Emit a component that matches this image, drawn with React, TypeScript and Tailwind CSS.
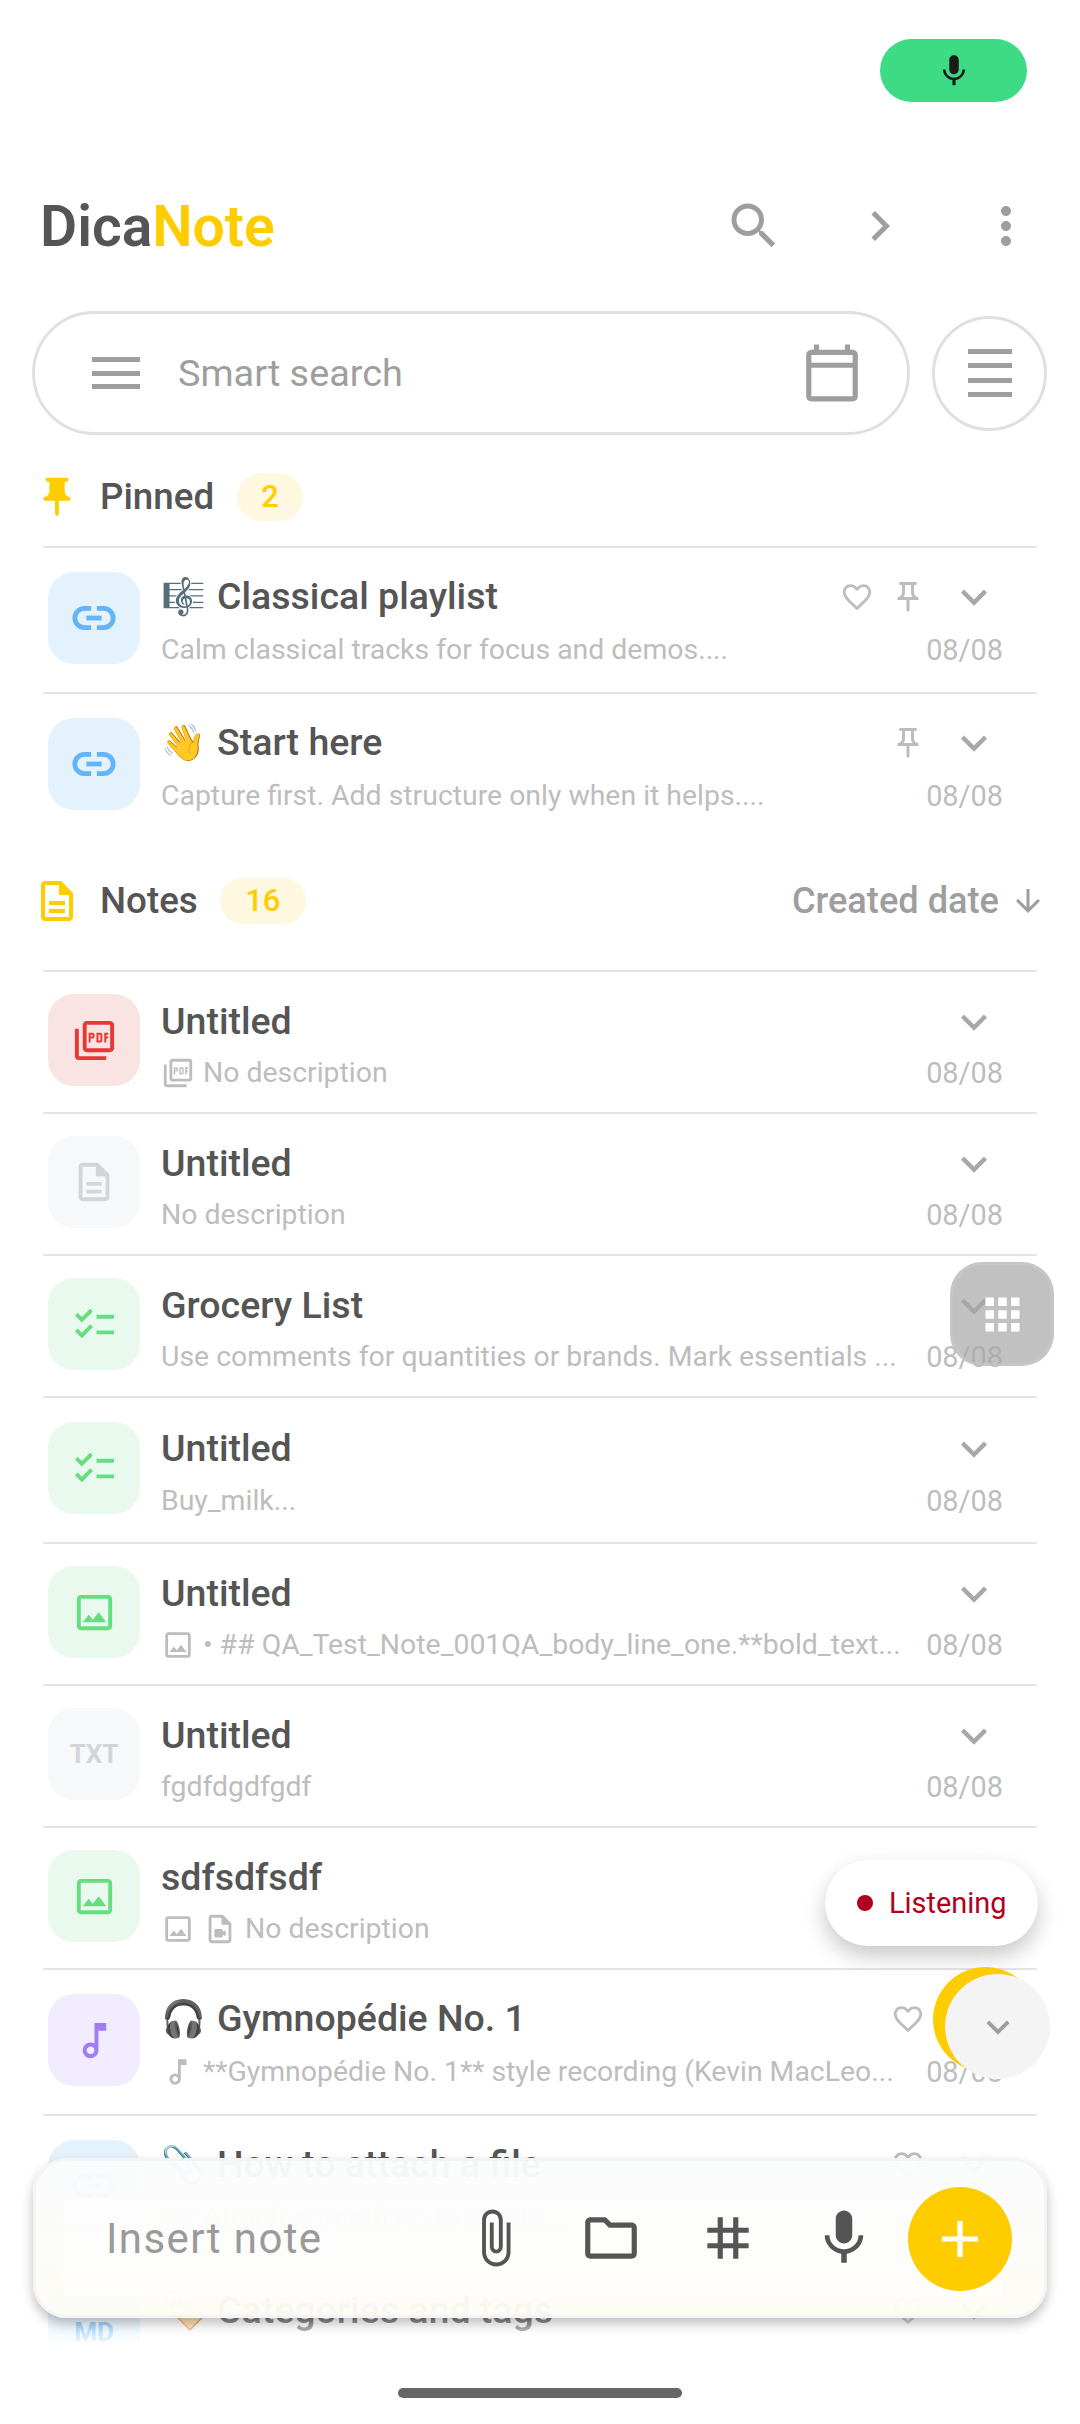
import React from "react";
import {
  MdAdd,
  MdApps,
  MdArrowDownward,
  MdChecklist,
  MdChevronRight,
  MdFavoriteBorder,
  MdKeyboardArrowDown,
  MdMic,
  MdMoreVert,
  MdOutlineAttachFile,
  MdOutlineCalendarToday,
  MdOutlineDescription,
  MdOutlineFolder,
  MdOutlineImage,
  MdOutlineMusicNote,
  MdOutlinePictureAsPdf,
  MdOutlinePushPin,
  MdOutlineVideoFile,
  MdPushPin,
  MdSearch,
  MdTag,
} from "react-icons/md";

type Kind = "link" | "pdf" | "doc" | "check" | "image" | "txt" | "music" | "md";

interface Note {
  kind: Kind;
  emoji?: string;
  title: string;
  desc: string;
  prefix?: React.ReactNode;
  heart?: boolean;
  pin?: boolean;
  tall?: boolean;
}

const small = "shrink-0 text-[#bdbdbd]";

const pinned: Note[] = [
  {
    kind: "link",
    emoji: "🎼",
    title: "Classical playlist",
    desc: "Calm classical tracks for focus and demos....",
    heart: true,
    pin: true,
    tall: true,
  },
  {
    kind: "link",
    emoji: "👋",
    title: "Start here",
    desc: "Capture first. Add structure only when it helps....",
    pin: true,
    tall: true,
  },
];

const notes: Note[] = [
  {
    kind: "pdf",
    title: "Untitled",
    desc: "No description",
    prefix: <MdOutlinePictureAsPdf size={34} className={small} />,
  },
  { kind: "doc", title: "Untitled", desc: "No description" },
  {
    kind: "check",
    title: "Grocery List",
    desc: "Use comments for quantities or brands. Mark essentials ...",
  },
  { kind: "check", title: "Untitled", desc: "Buy_milk...", tall: true },
  {
    kind: "image",
    title: "Untitled",
    desc: "• ## QA_Test_Note_001QA_body_line_one.**bold_text...",
    prefix: <MdOutlineImage size={34} className={small} />,
  },
  { kind: "txt", title: "Untitled", desc: "fgdfdgdfgdf" },
  {
    kind: "image",
    title: "sdfsdfsdf",
    desc: "No description",
    prefix: (
      <>
        <MdOutlineImage size={34} className={small} />
        <MdOutlineVideoFile size={34} className={small} />
      </>
    ),
  },
  {
    kind: "music",
    emoji: "🎧",
    title: "Gymnopédie No. 1",
    desc: "**Gymnopédie No. 1** style recording (Kevin MacLeo...",
    prefix: <MdOutlineMusicNote size={34} className={small} />,
    heart: true,
    tall: true,
  },
  {
    kind: "link",
    emoji: "📎",
    title: "How to attach a file",
    desc: "## Attach something to a note...",
    heart: true,
    tall: true,
  },
  {
    kind: "md",
    emoji: "🏷️",
    title: "Categories and tags",
    desc: "Use categories and tags...",
    heart: true,
    tall: true,
  },
];

const DocGlyph = ({ size }: { size: number }) => (
  <svg width={size} height={size} viewBox="0 0 24 24" fill="currentColor">
    <path d="M8 16h8v2H8zm0-4h8v2H8zm6-10H6c-1.1 0-2 .9-2 2v16c0 1.1.89 2 1.99 2H18c1.1 0 2-.9 2-2V8l-6-6zm4 18H6V4h7v5h5v11z" />
    <path d="M13 3h1l6 6h-7z" />
  </svg>
);

const LinkGlyph = ({ size }: { size: number }) => (
  <svg width={size} height={size} viewBox="0 0 24 24" fill="none" stroke="currentColor" strokeWidth="2.5">
    <path d="M10.5 7H7a5 5 0 0 0 0 10h3.5" />
    <path d="M13.5 7H17a5 5 0 0 1 0 10h-3.5" />
    <path d="M8 12h8" />
  </svg>
);

const KindIcon = ({ kind }: { kind: Kind }) => {
  switch (kind) {
    case "link":
      return (
        <div className="flex h-[92px] w-[92px] shrink-0 items-center justify-center rounded-[26px] bg-[#e3f2fd] text-[#64b5f6]">
          <LinkGlyph size={46} />
        </div>
      );
    case "pdf":
      return (
        <div className="flex h-[92px] w-[92px] shrink-0 items-center justify-center rounded-[26px] bg-[#fae3e3] text-[#e53935]">
          <MdOutlinePictureAsPdf size={47} />
        </div>
      );
    case "doc":
      return (
        <div className="flex h-[92px] w-[92px] shrink-0 items-center justify-center rounded-[26px] bg-[#f7f8fa] text-[#d1d5db]">
          <DocGlyph size={46} />
        </div>
      );
    case "check":
      return (
        <div className="flex h-[92px] w-[92px] shrink-0 items-center justify-center rounded-[26px] bg-[#e9f9ee] text-[#66dd80]">
          <MdChecklist size={47} />
        </div>
      );
    case "image":
      return (
        <div className="flex h-[92px] w-[92px] shrink-0 items-center justify-center rounded-[26px] bg-[#e9f9ee] text-[#66dd80]">
          <MdOutlineImage size={47} />
        </div>
      );
    case "txt":
      return (
        <div className="flex h-[92px] w-[92px] shrink-0 items-center justify-center rounded-[26px] bg-[#f7f8fa] text-[26px] font-bold text-[#d1d5db]">
          TXT
        </div>
      );
    case "music":
      return (
        <div className="flex h-[92px] w-[92px] shrink-0 items-center justify-center rounded-[26px] bg-[#f1ecff] text-[#a07cf5]">
          <MdOutlineMusicNote size={47} />
        </div>
      );
    case "md":
      return (
        <div className="flex h-[92px] w-[92px] shrink-0 items-center justify-center rounded-[26px] bg-[#e3f2fd] text-[26px] font-bold text-[#64b5f6]">
          MD
        </div>
      );
  }
};

const Row = ({ note }: { note: Note }) => (
  <div
    className={`flex items-center gap-[21px] border-t-2 border-[#e4e4e4] pb-[4px] pl-[5px] pr-[34px] ${
      note.tall ? "h-[146px]" : "h-[142px]"
    }`}
  >
    <KindIcon kind={note.kind} />
    <div className={`min-w-0 flex-1 ${note.emoji ? "pt-[12px]" : "pt-[14px]"}`}>
      <div className="flex h-[52px] items-center">
        {note.emoji && <span className="mr-[11px] text-[36px] leading-none">{note.emoji}</span>}
        <span className="flex-1 text-[37.5px] font-medium leading-none text-[#555]">{note.title}</span>
        {note.heart && (
          <MdFavoriteBorder size={34} className={`text-[#bdbdbd] ${note.pin ? "mr-[16px]" : "mr-[23px]"}`} />
        )}
        {note.pin && <MdOutlinePushPin size={36} className="mr-[22px] text-[#bdbdbd]" />}
        <MdKeyboardArrowDown size={52} className="mr-[3px] text-[#a8a8a8]" />
      </div>
      <div
        className={`flex items-center justify-between gap-[20px] ${
          note.emoji ? "h-[54px]" : note.tall ? "h-[52px]" : "h-[50px]"
        }`}
      >
        <div className="flex min-w-0 items-center gap-[8px]">
          {note.prefix}
          <span className="whitespace-nowrap text-[28.4px] leading-none text-[#bdbdbd]">{note.desc}</span>
        </div>
        <span className="shrink-0 text-[28.9px] leading-none text-[#bdbdbd]">08/08</span>
      </div>
    </div>
  </div>
);

export default function App() {
  return (
    <div className="relative h-[2424px] w-[1080px] overflow-hidden bg-white font-['Roboto',sans-serif]">
      {/* status bar */}
      <div className="flex h-[130px] justify-end pr-[53px] pt-[39px]">
        <div className="flex h-[63px] w-[147px] items-center justify-center rounded-full bg-[#3ddc84] text-[#1a1a1a]">
          <MdMic size={38} />
        </div>
      </div>

      {/* header */}
      <div className="mb-[41px] mt-[50px] flex h-[90px] items-center pl-[40px] pt-[2px]">
        <div className="flex-1 text-[57px] font-semibold leading-none text-[#555]">
          Dica<span className="text-[#ffcc00]">Note</span>
        </div>
        <MdSearch size={60} className="mr-[66px] text-[#9e9e9e]" />
        <MdChevronRight size={60} className="mr-[66px] text-[#9e9e9e]" />
        <MdMoreVert size={60} className="mr-[44px] text-[#9e9e9e]" />
      </div>

      {/* search */}
      <div className="flex h-[124px] items-center gap-[22px] pl-[32px]">
        <div className="flex h-[124px] w-[878px] items-center rounded-[62px] border-[3px] border-[#e0e0e0] pl-[57px] pr-[44px]">
          <svg width="48" height="32" viewBox="0 0 48 32" className="mr-[38px] shrink-0 fill-[#9e9e9e]">
            <rect width="48" height="5" y="0" />
            <rect width="48" height="5" y="14" />
            <rect width="48" height="5" y="27" />
          </svg>
          <span className="flex-1 pt-[2px] text-[37.8px] leading-none text-[#9e9e9e]">Smart search</span>
          <MdOutlineCalendarToday size={62} className="text-[#9e9e9e]" />
        </div>
        <div className="flex h-[115px] w-[115px] items-center justify-center rounded-full border-[3px] border-[#e0e0e0]">
          <svg width="44" height="48" viewBox="0 0 44 48" className="fill-[#9e9e9e]">
            <rect width="44" height="5" y="0" />
            <rect width="44" height="5" y="14" />
            <rect width="44" height="5" y="29" />
            <rect width="44" height="5" y="43" />
          </svg>
        </div>
      </div>

      {/* pinned */}
      <div className="flex h-[111px] items-center pl-[34px] pt-[13px]">
        <MdPushPin size={46} className="mr-[20px] text-[#ffcc00]" />
        <span className="text-[36.75px] font-medium leading-none text-[#555]">Pinned</span>
        <span className="ml-[23px] flex h-[48px] w-[66px] items-center justify-center rounded-[24px] bg-[#fff8e1] text-[31px] font-medium text-[#ffcc00]">
          2
        </span>
      </div>
      <div className="ml-[43px] w-[994px]">
        {pinned.map((n) => (
          <Row key={n.title} note={n} />
        ))}
      </div>

      {/* notes */}
      <div className="flex h-[132px] items-center pb-[6px] pl-[33px] pr-[34px]">
        <MdOutlineDescription size={48} className="mr-[19px] text-[#ffcc00]" />
        <span className="text-[36.75px] font-medium leading-none text-[#555]">Notes</span>
        <span className="ml-[22px] flex h-[46px] w-[86px] items-center justify-center rounded-[23px] bg-[#fff8e1] text-[31px] font-medium text-[#ffcc00]">
          16
        </span>
        <span className="ml-auto text-[36.2px] font-medium leading-none text-[#9e9e9e]">Created date</span>
        <MdArrowDownward size={36} className="ml-[11px] text-[#9e9e9e]" />
      </div>
      <div className="ml-[43px] w-[994px]">
        {notes.map((n, i) => (
          <Row key={i} note={n} />
        ))}
      </div>

      {/* fade under the bar */}
      <div className="absolute inset-x-0 bottom-0 h-[114px] bg-gradient-to-b from-white/0 to-white to-[32%]" />

      {/* floating grid button */}
      <div className="absolute left-[950px] top-[1262px] flex h-[104px] w-[104px] items-center justify-center rounded-[32px] border-[3px] border-[#c8c8c8]/70 bg-[#a6a6a6]/70 text-white">
        <MdApps size={51} />
      </div>

      {/* listening pill */}
      <div className="absolute left-[825px] top-[1860px] flex h-[86px] w-[213px] items-center gap-[16px] rounded-[43px] bg-white pl-[32px] shadow-[0_10px_22px_rgba(0,0,0,0.22)]">
        <span className="h-[16px] w-[16px] rounded-full bg-[#b00020]" />
        <span className="text-[28.9px] leading-none text-[#b00020]">Listening</span>
      </div>

      {/* recording bubble */}
      <div className="absolute left-[933px] top-[1967px] h-[105px] w-[105px] rounded-full bg-[#ffcc00]" />
      <div className="absolute left-[945px] top-[1974px] flex h-[105px] w-[105px] items-center justify-center rounded-full bg-[#f4f4f4] text-[#9e9e9e]">
        <MdKeyboardArrowDown size={46} />
      </div>

      {/* bottom bar */}
      <div className="absolute left-[33px] top-[2158px] flex h-[160px] w-[1014px] items-center rounded-[34px] border-[3px] border-[#f3f3f3]/80 bg-gradient-to-b from-[#fafbfc]/97 to-[#fdfcf5]/97 pl-[70px] pr-[32px] shadow-[0_6px_12px_rgba(0,0,0,0.25)]">
        <div className="absolute bottom-[18px] left-[27px] right-[42px] top-[38px] bg-white/40" />
        <span className="relative flex-1 pt-[2px] text-[42px] leading-none tracking-[1.4px] text-[#9a9a9a]">Insert note</span>
        <MdOutlineAttachFile size={62} className="relative mr-[54px] text-[#555]" />
        <MdOutlineFolder size={62} className="relative mr-[55px] text-[#555]" />
        <MdTag size={62} className="relative mr-[52px] text-[#555]" />
        <MdMic size={66} className="relative mr-[31px] text-[#555]" />
        <div className="relative mt-[2px] flex h-[104px] w-[104px] items-center justify-center rounded-full bg-[#ffcc00] text-white">
          <MdAdd size={62} />
        </div>
      </div>

      {/* home indicator */}
      <div className="absolute left-[398px] top-[2388px] h-[10px] w-[284px] rounded-full bg-[#666]" />
    </div>
  );
}
